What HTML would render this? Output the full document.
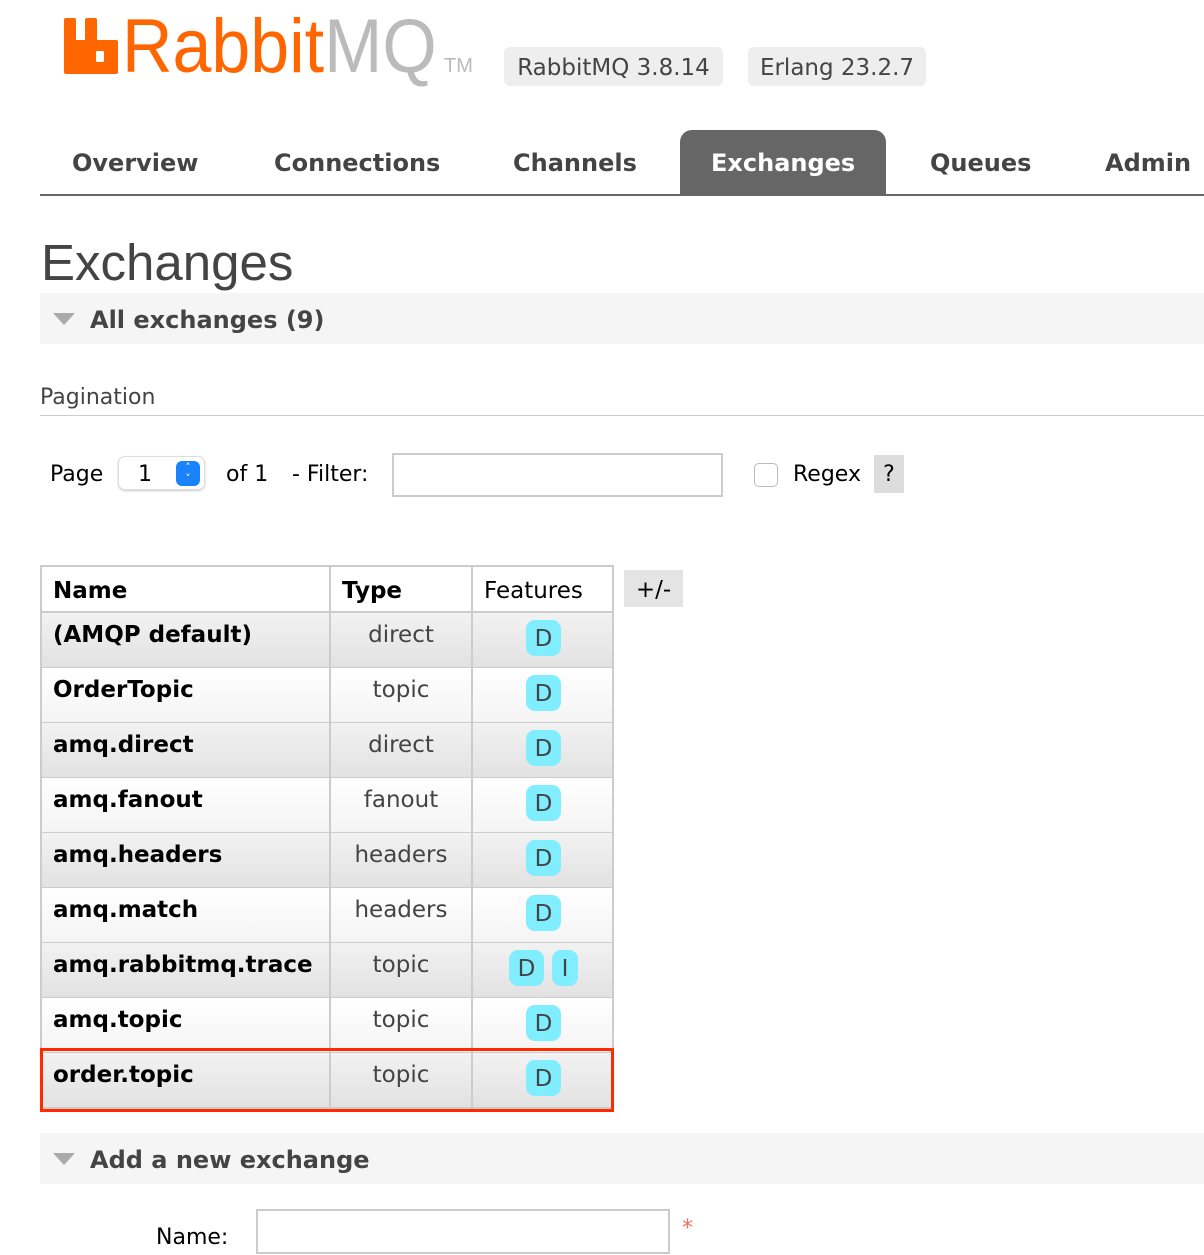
<!DOCTYPE html>
<html><head><meta charset="utf-8"><style>
*{margin:0;padding:0;box-sizing:border-box}
body{width:1204px;height:1255px;background:#fff;font-family:"DejaVu Sans","Liberation Sans",sans-serif;color:#000;position:relative;overflow:hidden}
.a{position:absolute;white-space:nowrap}
.nav{font-weight:bold;font-size:24px;color:#444;top:149px}
.row{position:absolute;left:40px;width:574px;height:56px;border:2px solid #ccc;border-top:none}
.g{background:linear-gradient(#f2f2f2,#e2e2e2)}
.w{background:linear-gradient(#fff,#f4f4f4)}
.c{position:absolute;top:0;height:100%;border-right:2px solid #ccc}
.nm{position:absolute;left:11px;top:9px;font-weight:bold;font-size:23px}
.ty{position:absolute;left:288px;width:142px;text-align:center;top:9px;font-size:23px;color:#444}
.b{position:absolute;top:7px;height:36px;background:#80eeff;border-radius:9px;font-size:23px;color:#444;text-align:center;line-height:38px}
.p{font-size:22px;top:462px}
</style></head><body>
<svg class="a" style="left:64px;top:18px" width="54" height="56" viewBox="0 0 54 56"><path d="M0 2Q0 0 2 0H10Q12 0 12 2V22H21V2Q21 0 23 0H31Q33 0 33 2V22H52Q54 22 54 24V54Q54 56 52 56H2Q0 56 0 54Z M32 34V43Q32 44 33 44H39Q40 44 40 43V34Q40 33 39 33H33Q32 33 32 34Z" fill="#ff6600" fill-rule="evenodd"/></svg>
<div class="a" style="left:122px;top:4px;font-size:76px;font-family:'Liberation Sans',sans-serif;transform:scaleX(0.92);transform-origin:left top;line-height:86px"><span style="color:#ff6600">Rabbit</span><span style="color:#bbb">MQ</span></div>
<div class="a" style="left:444px;top:55px;font-size:20px;color:#bbb;font-family:'Liberation Sans',sans-serif">TM</div>
<div class="a" style="left:504px;top:47px;width:219px;height:39px;background:#eee;border-radius:6px;font-size:23px;color:#444;line-height:42px;text-align:center">RabbitMQ 3.8.14</div>
<div class="a" style="left:748px;top:47px;width:178px;height:39px;background:#eee;border-radius:6px;font-size:23px;color:#444;line-height:42px;text-align:center">Erlang 23.2.7</div>
<div class="a" style="left:680px;top:130px;width:206px;height:66px;background:#666;border-radius:12px 12px 0 0"></div>
<div class="a nav" style="left:72px">Overview</div>
<div class="a nav" style="left:274px">Connections</div>
<div class="a nav" style="left:513px">Channels</div>
<div class="a nav" style="left:711px;color:#fff">Exchanges</div>
<div class="a nav" style="left:930px">Queues</div>
<div class="a nav" style="left:1105px">Admin</div>
<div class="a" style="left:40px;top:194px;width:1164px;height:2px;background:#666"></div>
<div class="a" style="left:41px;top:233px;font-size:51px;color:#444;font-family:'Liberation Sans',sans-serif">Exchanges</div>
<div class="a" style="left:40px;top:293px;width:1164px;height:51px;background:#f5f5f5"></div>
<div class="a" style="left:53px;top:313px;width:0;height:0;border-left:11px solid transparent;border-right:11px solid transparent;border-top:12px solid #aaa"></div>
<div class="a" style="left:90px;top:306px;font-size:24px;font-weight:bold;color:#444">All exchanges (9)</div>
<div class="a" style="left:40px;top:385px;font-size:22px;color:#444">Pagination</div>
<div class="a" style="left:40px;top:415px;width:1164px;height:1px;background:#ccc"></div>
<div class="a p" style="left:50px">Page</div>
<div class="a" style="left:118px;top:456px;width:87px;height:34px;border:1px solid #ddd;border-radius:7px;box-shadow:0 1px 2px #ccc"></div>
<div class="a p" style="left:138px">1</div>
<div class="a" style="left:176px;top:461px;width:24px;height:25px;background:#1a82fb;border-radius:6px;color:#fff;font-size:11px;text-align:center;line-height:11px;padding-top:1px">˄<br>˅</div>
<div class="a p" style="left:226px">of 1</div>
<div class="a p" style="left:292px">- Filter:</div>
<div class="a" style="left:392px;top:453px;width:331px;height:44px;border:2px solid #ccc"></div>
<div class="a" style="left:754px;top:463px;width:24px;height:24px;border:1px solid #bbb;border-radius:5px"></div>
<div class="a p" style="left:793px">Regex</div>
<div class="a" style="left:874px;top:455px;width:30px;height:38px;background:#ddd;font-size:22px;text-align:center;line-height:40px">?</div>
<div class="row" style="top:565px;height:48px;border-top:2px solid #ccc;background:#fff">
<div class="c" style="left:0;width:289px"></div><div class="c" style="left:289px;width:142px"></div>
<div class="nm" style="top:11px">Name</div><div class="a" style="left:300px;top:11px;font-weight:bold;font-size:23px">Type</div><div class="a" style="left:442px;top:11px;font-size:23px">Features</div></div>
<div class="a" style="left:624px;top:570px;width:59px;height:37px;background:#e4e4e4;font-size:23px;text-align:center;line-height:40px">+/-</div>

<div class="row g" style="top:613px"><div class="c" style="left:0;width:289px"></div><div class="c" style="left:289px;width:142px"></div><div class="nm">(AMQP default)</div><div class="ty">direct</div><div class="b" style="left:484px;width:35px">D</div></div>
<div class="row w" style="top:668px"><div class="c" style="left:0;width:289px"></div><div class="c" style="left:289px;width:142px"></div><div class="nm">OrderTopic</div><div class="ty">topic</div><div class="b" style="left:484px;width:35px">D</div></div>
<div class="row g" style="top:723px"><div class="c" style="left:0;width:289px"></div><div class="c" style="left:289px;width:142px"></div><div class="nm">amq.direct</div><div class="ty">direct</div><div class="b" style="left:484px;width:35px">D</div></div>
<div class="row w" style="top:778px"><div class="c" style="left:0;width:289px"></div><div class="c" style="left:289px;width:142px"></div><div class="nm">amq.fanout</div><div class="ty">fanout</div><div class="b" style="left:484px;width:35px">D</div></div>
<div class="row g" style="top:833px"><div class="c" style="left:0;width:289px"></div><div class="c" style="left:289px;width:142px"></div><div class="nm">amq.headers</div><div class="ty">headers</div><div class="b" style="left:484px;width:35px">D</div></div>
<div class="row w" style="top:888px"><div class="c" style="left:0;width:289px"></div><div class="c" style="left:289px;width:142px"></div><div class="nm">amq.match</div><div class="ty">headers</div><div class="b" style="left:484px;width:35px">D</div></div>
<div class="row g" style="top:943px"><div class="c" style="left:0;width:289px"></div><div class="c" style="left:289px;width:142px"></div><div class="nm">amq.rabbitmq.trace</div><div class="ty">topic</div><div class="b" style="left:467px;width:35px">D</div><div class="b" style="left:510px;width:26px">I</div></div>
<div class="row w" style="top:998px"><div class="c" style="left:0;width:289px"></div><div class="c" style="left:289px;width:142px"></div><div class="nm">amq.topic</div><div class="ty">topic</div><div class="b" style="left:484px;width:35px">D</div></div>
<div class="row g" style="top:1053px"><div class="c" style="left:0;width:289px"></div><div class="c" style="left:289px;width:142px"></div><div class="nm">order.topic</div><div class="ty">topic</div><div class="b" style="left:484px;width:35px">D</div></div>
<div class="a" style="left:40px;top:1048px;width:574px;height:64px;border:3px solid #ff2a00"></div>

<div class="a" style="left:40px;top:1133px;width:1164px;height:51px;background:#f5f5f5"></div>
<div class="a" style="left:53px;top:1153px;width:0;height:0;border-left:11px solid transparent;border-right:11px solid transparent;border-top:12px solid #aaa"></div>
<div class="a" style="left:90px;top:1146px;font-size:24px;font-weight:bold;color:#444">Add a new exchange</div>
<div class="a" style="left:156px;top:1225px;font-size:22px">Name:</div>
<div class="a" style="left:256px;top:1209px;width:414px;height:45px;border:2px solid #ccc"></div>
<div class="a" style="left:682px;top:1216px;font-size:22px;color:#f66">*</div>
</body></html>
